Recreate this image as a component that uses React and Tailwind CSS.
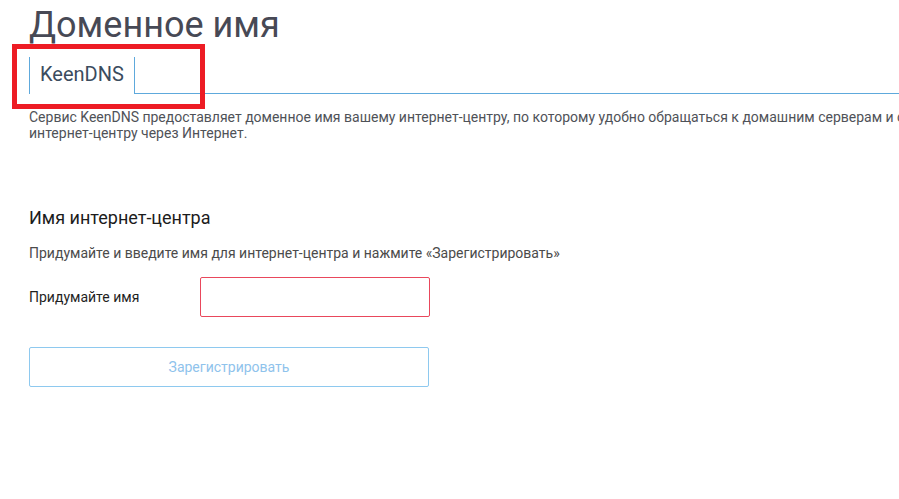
export default function App() {
  return (
    <div className="relative h-[499px] w-[899px] overflow-hidden bg-white font-['Roboto',sans-serif]">
      <div className="w-[1000px] pl-[29px] pt-[4px]">
        {/* ЗАГОЛОВОК */}
        <h1 className="text-[36px] leading-[42px] font-normal text-[#474955]">Доменное имя</h1>

        {/* ВКЛАДКИ */}
        <div className="mt-[11px] flex h-[37px]">
          <div className="h-full border-x border-[#5ea9dc] px-[10px] pb-[2px] text-[20px] leading-[35px] text-[#3b4c5e]">
            KeenDNS
          </div>
          <div className="flex-1 border-b border-[#5ea9dc]" />
        </div>

        <p className="mt-[15px] w-[990px] text-[14px] leading-[16px] text-[#4f5258]">
          Сервис KeenDNS предоставляет доменное имя вашему интернет-центру, по которому удобно обращаться к домашним серверам и сервисам интернет-центру через Интернет.
        </p>

        {/* ИМЯ ИНТЕРНЕТ-ЦЕНТРА */}
        <h2 className="mt-[66px] text-[18px] leading-[21px] text-[#1c1c1c]">Имя интернет-центра</h2>
        <p className="mt-[18px] text-[14px] leading-[15px] text-[#4b4b4b]">
          Придумайте и введите имя для интернет-центра и нажмите «Зарегистрировать»
        </p>

        <div className="mt-[16px] flex items-center">
          <label className="w-[171px] text-[14px] leading-[15px] text-[#1f1f1f]">Придумайте имя</label>
          <input
            type="text"
            className="h-[40px] w-[230px] rounded-[2px] border border-[#e9485c] bg-white px-3 text-[14px] outline-none"
          />
        </div>

        <button className="mt-[30px] h-[40px] w-[400px] rounded-[2px] border border-[#8ec9ef] bg-white text-[14px] text-[#8fc3ec]">
          Зарегистрировать
        </button>
      </div>

      {/* выделение */}
      <div className="absolute left-[12px] top-[44px] h-[65px] w-[193px] border-[5px] border-[#ed1c24]" />
    </div>
  );
}
